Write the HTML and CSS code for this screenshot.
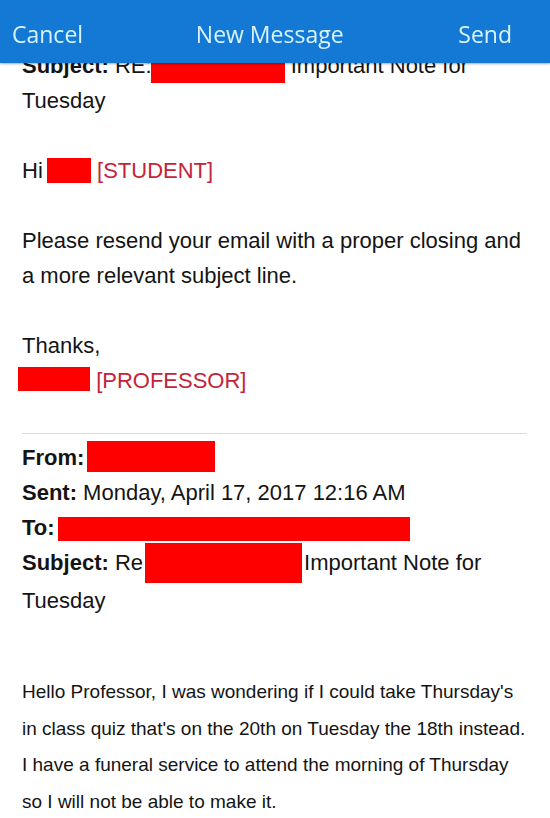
FILE: index.html
```html
<!DOCTYPE html>
<html>
<head>
<meta charset="utf-8">
<link rel="stylesheet" href="styles.css">
</head>
<body>
<header class="topbar">
  <span class="bar-btn">Cancel</span>
  <span class="bar-title">New Message</span>
  <span class="bar-btn">Send</span>
</header>
<main class="mail">
  <p class="para"><b>Subject:</b> RE:<span class="redact r-sub1"></span> Important Note for<br>Tuesday</p>
  <p class="para">Hi <span class="redact r-hi"></span> <span class="tag">[STUDENT]</span></p>
  <p class="para">Please resend your email with a proper closing and<br>a more relevant subject line.</p>
  <p class="para">Thanks,<br><span class="redact r-prof"></span> <span class="tag">[PROFESSOR]</span></p>
  <hr class="divider">
  <div class="headers">
    <div><b>From:</b><span class="redact r-from"></span></div>
    <div><b>Sent:</b> Monday, April 17, 2017 12:16 AM</div>
    <div><b>To:</b><span class="redact r-to"></span></div>
    <div><b>Subject:</b> Re<span class="redact r-sub2"></span>Important Note for<br>Tuesday</div>
  </div>
  <p class="body-small">Hello Professor, I was wondering if I could take Thursday's<br>in class quiz that's on the 20th on Tuesday the 18th instead.<br>I have a funeral service to attend the morning of Thursday<br>so I will not be able to make it.</p>
</main>
</body>
</html>
```
FILE: styles.css
```css
html, body {
  margin: 0;
  padding: 0;
  background: #fff;
}
body {
  width: 550px;
  height: 818px;
  overflow: hidden;
  font-family: "Liberation Sans", Arial, sans-serif;
  color: #141414;
}
.topbar {
  position: fixed;
  top: 0;
  left: 0;
  right: 0;
  height: 63px;
  background: #1479d4;
  box-shadow: 0 1px 2px rgba(0,0,0,0.35);
  display: flex;
  justify-content: space-between;
  align-items: center;
  padding: 5px 38px 0 12px;
  box-sizing: border-box;
  font-family: "Open Sans", sans-serif;
  font-size: 23px;
  color: #d8f3ff;
  z-index: 2;
}
.bar-title {
  margin-left: -2px;
}
.mail {
  padding: 48px 10px 0 22px;
  font-size: 22px;
  line-height: 35px;
}
.para {
  margin: 0 0 35px 0;
  white-space: nowrap;
}
.redact {
  display: inline-block;
  background: #ff0000;
}
.r-sub1 { width: 134px; height: 30px; margin: -12px 0 0 -1px; vertical-align: -10px; }
.r-hi { width: 44px; height: 25px; vertical-align: -5px; margin-left: -2px; }
.r-prof { width: 72px; height: 24px; vertical-align: -3px; margin-left: -4px; }
.r-from { width: 128px; height: 31px; vertical-align: -7px; margin-left: 3px; }
.r-to { width: 352px; height: 24px; vertical-align: -6px; margin-left: 3px; }
.r-sub2 { width: 157px; height: 40px; vertical-align: -13px; margin: -14px 2px 0 2px; }
.tag {
  color: #c4243a;
}
.divider {
  border: 0;
  border-top: 1px solid #dcdcdc;
  margin: 1px 0 6px 0;
  width: 505px;
}
.headers {
  margin-bottom: 56px;
  white-space: nowrap;
}
.body-small {
  margin: 0;
  font-size: 19px;
  line-height: 36.5px;
  white-space: nowrap;
}
```
